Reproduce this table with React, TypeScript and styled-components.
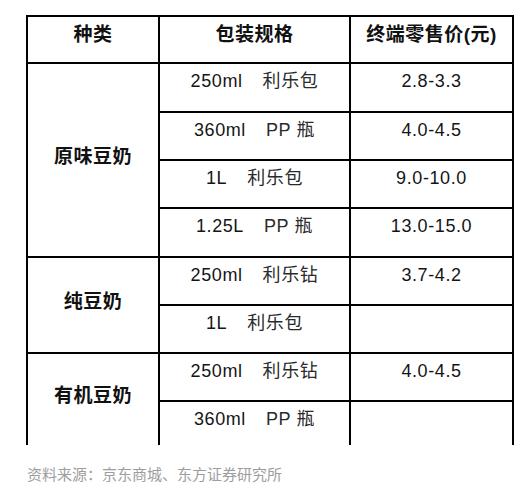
import * as React from 'react';
import styled, {createGlobalStyle} from 'styled-components';

const GlobalStyle = createGlobalStyle`
  html, body {
    margin: 0;
    padding: 0;
    background: #ffffff;
  }
  body {
    font-family: "Liberation Sans", "Noto Sans CJK SC", sans-serif;
  }
`;

const Page = styled.div`
  width: 529px;
  height: 487px;
  overflow: hidden;
  padding: 15px 0 0 26px;
  box-sizing: border-box;
`;

const Table = styled.table`
  width: 486px;
  border-collapse: collapse;
  table-layout: fixed;
  border-top: 2px solid #000;
`;

const HeadCell = styled.th`
  height: 47px;
  padding: 6px 0 0;
  box-sizing: border-box;
  vertical-align: top;
  border: 2px solid #000;
  font-size: 19px;
  line-height: 24px;
  font-weight: bold;
  color: #111;
  letter-spacing: 0.5px;
`;

const Row = styled.tr<{$h: number}>`
  height: ${p => p.$h}px;
`;

const GroupCell = styled.td<{$last?: boolean}>`
  border: 2px solid #000;
  border-bottom: ${p => (p.$last ? 'none' : '2px solid #000')};
  text-align: center;
  vertical-align: middle;
  padding: 0 0 12px;
  font-size: 19px;
  font-weight: bold;
  color: #111;
  letter-spacing: 0.5px;
`;

const Cell = styled.td<{$last?: boolean}>`
  border: 2px solid #000;
  border-bottom: ${p => (p.$last ? 'none' : '2px solid #000')};
  text-align: center;
  vertical-align: top;
  padding: 5px 0 0;
  font-size: 18px;
  line-height: 24px;
  color: #151515;
  letter-spacing: 0.6px;
`;

const Volume = styled.span`
  margin-right: 20px;
`;

const Pack = styled.span`
  color: #2a2a2a;
`;

const Source = styled.div`
  margin-top: 20px;
  padding-left: 1px;
  font-size: 15px;
  line-height: 18px;
  color: #9d9d9d;
  font-family: "Noto Sans CJK SC", "Liberation Sans", sans-serif;
`;

type Item = {vol: string; pack: string; price: string};
type Group = {name: string; items: Item[]};

const groups: Group[] = [
  {
    name: '原味豆奶',
    items: [
      {vol: '250ml', pack: '利乐包', price: '2.8-3.3'},
      {vol: '360ml', pack: 'PP 瓶', price: '4.0-4.5'},
      {vol: '1L', pack: '利乐包', price: '9.0-10.0'},
      {vol: '1.25L', pack: 'PP 瓶', price: '13.0-15.0'},
    ],
  },
  {
    name: '纯豆奶',
    items: [
      {vol: '250ml', pack: '利乐钻', price: '3.7-4.2'},
      {vol: '1L', pack: '利乐包', price: ''},
    ],
  },
  {
    name: '有机豆奶',
    items: [
      {vol: '250ml', pack: '利乐钻', price: '4.0-4.5'},
      {vol: '360ml', pack: 'PP 瓶', price: ''},
    ],
  },
];

const heights = [49, 48, 48, 49, 48, 48, 48, 44];

export default function App() {
  let idx = 0;
  return (
    <Page>
      <GlobalStyle />
      <Table>
        <colgroup>
          <col style={{width: 132}} />
          <col style={{width: 191}} />
          <col style={{width: 163}} />
        </colgroup>
        <thead>
          <tr>
            <HeadCell>种类</HeadCell>
            <HeadCell>包装规格</HeadCell>
            <HeadCell>终端零售价(元)</HeadCell>
          </tr>
        </thead>
        <tbody>
          {groups.map((g, gi) =>
            g.items.map((it, ii) => {
              const h = heights[idx++];
              const last = gi === groups.length - 1 && ii === g.items.length - 1;
              return (
                <Row key={g.name + ii} $h={h}>
                  {ii === 0 && (
                    <GroupCell rowSpan={g.items.length} $last={gi === groups.length - 1}>
                      {g.name}
                    </GroupCell>
                  )}
                  <Cell $last={last}>
                    <Volume>{it.vol}</Volume>
                    <Pack>{it.pack}</Pack>
                  </Cell>
                  <Cell $last={last}>{it.price}</Cell>
                </Row>
              );
            })
          )}
        </tbody>
      </Table>
      <Source>资料来源：京东商城、东方证券研究所</Source>
    </Page>
  );
}
